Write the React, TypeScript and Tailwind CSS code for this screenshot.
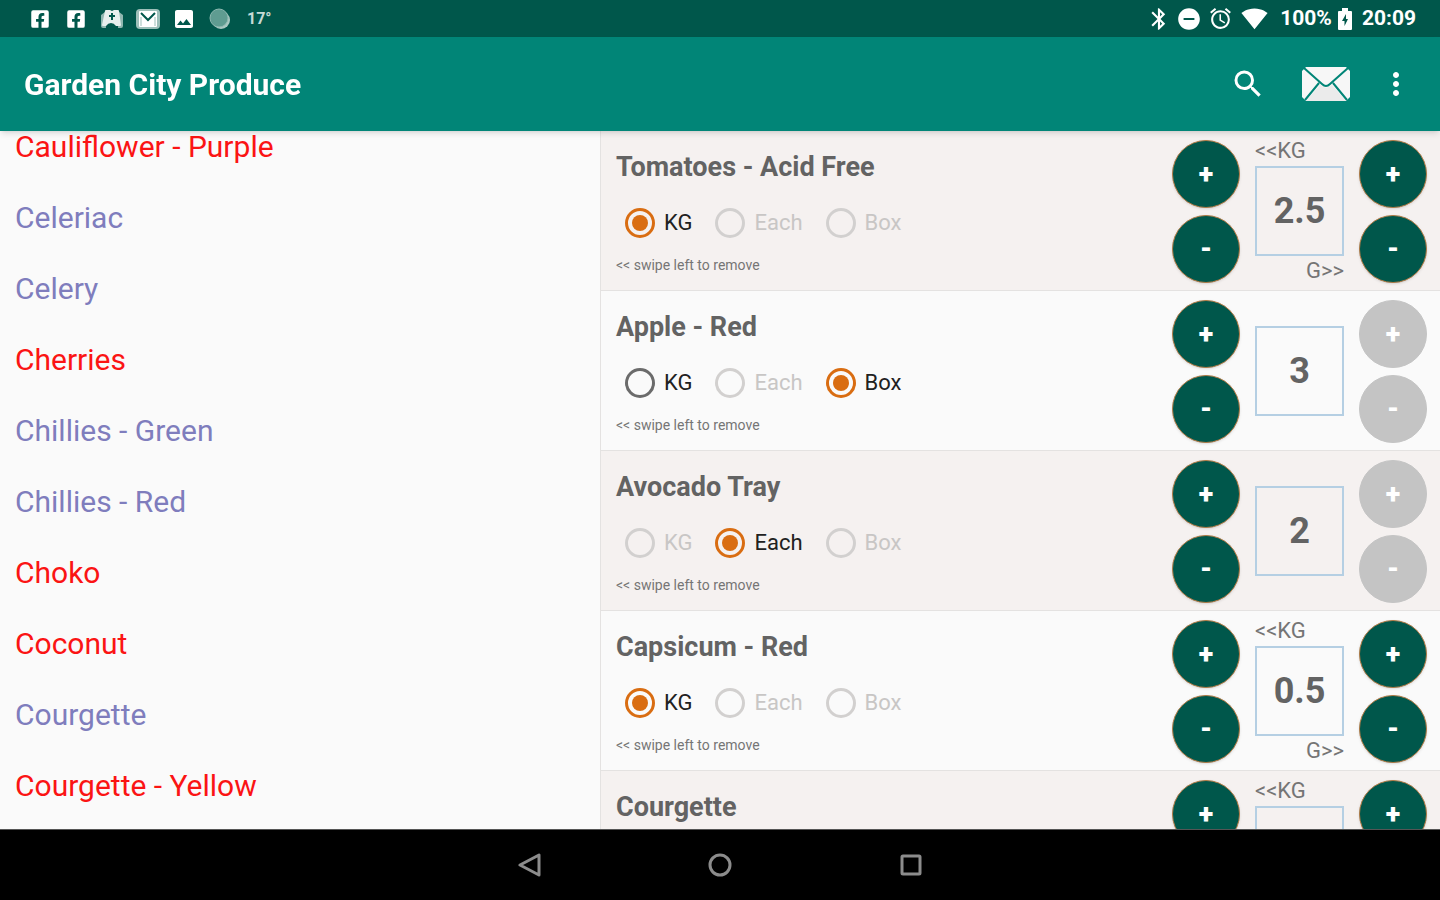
import React, { useState } from 'react';
import { MdAlarm, MdBluetooth, MdDoNotDisturbOn, MdImage, MdMoreVert, MdSearch, MdSignalWifi4Bar } from 'react-icons/md';
import { FaFacebookSquare } from 'react-icons/fa';

type Unit = 'KG' | 'Each' | 'Box';

interface Produce {
  name: string;
  selected: boolean;
}

interface OrderLine {
  name: string;
  unit: Unit;
  units: Unit[];
  qty: number;
}

const PRODUCE: Produce[] = [
  { name: 'Cauliflower - Purple', selected: true },
  { name: 'Celeriac', selected: false },
  { name: 'Celery', selected: false },
  { name: 'Cherries', selected: true },
  { name: 'Chillies - Green', selected: false },
  { name: 'Chillies - Red', selected: false },
  { name: 'Choko', selected: true },
  { name: 'Coconut', selected: true },
  { name: 'Courgette', selected: false },
  { name: 'Courgette - Yellow', selected: true },
];

const INITIAL_ORDER: OrderLine[] = [
  { name: 'Tomatoes - Acid Free', unit: 'KG', units: ['KG'], qty: 2.5 },
  { name: 'Apple - Red', unit: 'Box', units: ['KG', 'Box'], qty: 3 },
  { name: 'Avocado Tray', unit: 'Each', units: ['Each'], qty: 2 },
  { name: 'Capsicum - Red', unit: 'KG', units: ['KG'], qty: 0.5 },
  { name: 'Courgette', unit: 'KG', units: ['KG'], qty: 1 },
];

const ALL_UNITS: Unit[] = ['KG', 'Each', 'Box'];

const MapIcon = () => (
  <svg width="24" height="20" viewBox="0 0 24 20">
    <path d="M5 3 1 6v11q0 2 2 2h3zM19 3l4 3v11q0 2-2 2h-3z" fill="#8fb7b0" />
    <path d="M5 2q0-1 1-1h4l2 1 2-1h4q1 0 1 1l2 14q0 1-1 1h-4q-2-3-5-3t-5 3H3q-1 0-1-1z" fill="#e6efed" />
    <path d="M12 4v7M9 7h6" stroke="#00574b" strokeWidth="2" />
  </svg>
);

const GmailIcon = () => (
  <svg width="24" height="20" viewBox="0 0 24 20">
    <rect width="24" height="20" rx="4" fill="#9dbfb9" />
    <rect x="3" y="2" width="18" height="16" rx="1" fill="#fff" />
    <path d="M5 4l7 7 7-7" fill="none" stroke="#00574b" strokeWidth="2" />
    <path d="M5 8v9M19 8v9" stroke="#9dbfb9" strokeWidth="1" />
  </svg>
);

const BatteryIcon = () => (
  <svg width="14" height="22" viewBox="0 0 14 22">
    <path d="M4 0h6v3h3q1 0 1 1v17q0 1-1 1H1q-1 0-1-1V4q0-1 1-1h3z" fill="#fff" />
    <path d="M8 6 4 13h2.500v5L10 11H8z" fill="#00574b" />
  </svg>
);

const EnvelopeIcon = () => (
  <svg width="50" height="36" viewBox="0 0 50 36">
    <path d="M5 1h40l4 4v26l-4 4H5l-4-4V5z" fill="#f7f7f7" />
    <path d="M5 35l14-16 6 3 6-3 14 16z" fill="#ebebeb" />
    <path d="M3 2l18 16q4 4 8 0L47 2M4 34l14-17M46 34L32 17" fill="none" stroke="#018577" strokeWidth="2" />
  </svg>
);

const StatusBar = () => (
  <div className="flex h-[37px] shrink-0 items-center justify-between bg-[#00574b] pr-6 pl-7 text-white">
    <div className="flex items-center gap-3">
      <FaFacebookSquare size={20} className="w-6" />
      <FaFacebookSquare size={20} className="w-6" />
      <MapIcon />
      <GmailIcon />
      <MdImage size={26} className="w-6" />
      <svg width="24" height="22" viewBox="0 0 24 22">
        <circle cx="13" cy="12" r="9" fill="#a9c8c2" />
        <circle cx="11" cy="10" r="9" fill="#5f9c91" stroke="#8db8b0" />
      </svg>
      <span className="ml-[3px] text-base font-bold text-[#c5dad6]">17°</span>
    </div>
    <div className="flex items-center text-[21px] font-bold">
      <MdBluetooth size={26} />
      <MdDoNotDisturbOn size={26} className="ml-1" />
      <MdAlarm size={25} className="ml-[6px]" />
      <MdSignalWifi4Bar size={27} className="ml-2" />
      <span className="mr-[6px] ml-3">100%</span>
      <BatteryIcon />
      <span className="ml-[10px]">20:09</span>
    </div>
  </div>
);

const RoundButton: React.FC<{ label: string; sign: string; disabled?: boolean; onClick: () => void }> = ({ label, sign, disabled, onClick }) => (
  <button
    aria-label={label}
    disabled={disabled}
    onClick={onClick}
    className="size-[68px] rounded-full border border-[#b07a45] bg-[#00574b] text-[27px] font-black text-white shadow-sm disabled:border-[#c4c4c4] disabled:bg-[#c4c4c4] disabled:shadow-none"
  >
    {sign}
  </button>
);

const OrderRow: React.FC<{ line: OrderLine; onChange: (line: OrderLine) => void }> = ({ line, onChange }) => {
  const byWeight = line.unit === 'KG';
  const step = (amount: number) => onChange({ ...line, qty: Math.max(0, line.qty + amount) });

  return (
    <li className="flex items-center gap-[15px] border-b border-[#e4e2e1] bg-[#fafafa] pr-[13px] pl-[15px] odd:bg-[#f5f1f0]">
      <div className="flex-1 pt-[2px]">
        <h2 className="text-[27px] leading-8 font-bold text-[#636363]">{line.name}</h2>
        <div className="mt-[22px] flex gap-[23px] pl-[9px]">
          {ALL_UNITS.map(unit => (
            <label
              key={unit}
              className="flex items-center gap-[9px] text-[22px] leading-9 text-[#212121] has-disabled:text-[#c8c6c5]"
            >
              <input
                type="radio"
                name={line.name}
                checked={line.unit === unit}
                disabled={!line.units.includes(unit)}
                onChange={() => onChange({ ...line, unit })}
                className="grid size-[30px] appearance-none place-content-center rounded-full border-3 border-[#6b6b6b] before:size-4 before:rounded-full checked:border-[#d96d12] checked:before:bg-[#d96d12] disabled:border-[#d2d0cf]"
              />
              {unit}
            </label>
          ))}
        </div>
        <p className="mt-4 text-[14px] leading-4 text-[#757575]">&lt;&lt; swipe left to remove</p>
      </div>

      <div className="flex flex-col gap-[7px] pt-[9px] pb-[7px]">
        <RoundButton label={`Increase ${line.name}`} sign="+" onClick={() => step(1)} />
        <RoundButton label={`Decrease ${line.name}`} sign="-" onClick={() => step(-1)} />
      </div>

      <div className="flex w-[89px] flex-col text-[22px] leading-[30px] text-[#757575]">
        {byWeight && <span>&lt;&lt;KG</span>}
        <input
          type="text"
          aria-label={`${line.name} quantity`}
          value={line.qty}
          onChange={e => onChange({ ...line, qty: Number(e.target.value) || 0 })}
          className="h-[90px] w-full border-2 border-[#b5cfe3] text-center text-4xl font-bold text-[#636363]"
        />
        {byWeight && <span className="text-right">G&gt;&gt;</span>}
      </div>

      <div className="flex flex-col gap-[7px] pt-[9px] pb-[7px]">
        <RoundButton label={`Increase ${line.name} grams`} sign="+" disabled={!byWeight} onClick={() => step(0.1)} />
        <RoundButton label={`Decrease ${line.name} grams`} sign="-" disabled={!byWeight} onClick={() => step(-0.1)} />
      </div>
    </li>
  );
};

const App: React.FC = () => {
  const [order, setOrder] = useState<OrderLine[]>(INITIAL_ORDER);

  const updateLine = (index: number, line: OrderLine) => {
    setOrder(order.map((l, i) => (i === index ? line : l)));
  };

  return (
    <div className="flex h-screen flex-col overflow-hidden bg-[#fafafa] font-['Roboto',sans-serif]">
      <StatusBar />

      {/* App bar */}
      <header className="z-10 flex h-[94px] shrink-0 items-center bg-[#018577] pr-[26px] pl-6 text-white shadow-md">
        <h1 className="flex-1 text-[30px] font-bold">Garden City Produce</h1>
        <button aria-label="Search"><MdSearch size={36} /></button>
        <button aria-label="Email order" className="ml-[35px]"><EnvelopeIcon /></button>
        <button aria-label="More options" className="ml-[27px]"><MdMoreVert size={36} /></button>
      </header>

      <main className="flex min-h-0 flex-1">
        {/* Produce list, scrolled part way */}
        <ul className="-mt-5 w-5/12 text-[30px]">
          {PRODUCE.map(item => (
            <li key={item.name} className="flex h-[71px] items-center pl-[15px]">
              <span className={item.selected ? 'text-[#fb1414]' : 'text-[#7f7dbd]'}>{item.name}</span>
            </li>
          ))}
        </ul>

        {/* Current order */}
        <ul className="flex-1 overflow-y-auto border-l border-[#e4e2e1] [scrollbar-width:none]">
          {order.map((line, index) => (
            <OrderRow key={line.name} line={line} onChange={l => updateLine(index, l)} />
          ))}
        </ul>
      </main>

      {/* Navigation bar */}
      <nav className="z-10 flex h-[71px] shrink-0 items-center justify-center gap-[167px] border-t border-[#555] bg-black text-[#8c8c8c]">
        <button aria-label="Back">
          <svg width="24" height="24" viewBox="0 0 24 24" fill="none" stroke="currentColor" strokeWidth="3">
            <path d="M22 2v20L3 12z" strokeLinejoin="round" />
          </svg>
        </button>
        <button aria-label="Home">
          <svg width="24" height="24" viewBox="0 0 24 24" fill="none" stroke="currentColor" strokeWidth="3">
            <circle cx="12" cy="12" r="10" />
          </svg>
        </button>
        <button aria-label="Recent apps">
          <svg width="24" height="24" viewBox="0 0 24 24" fill="none" stroke="currentColor" strokeWidth="3">
            <rect x="3" y="3" width="18" height="18" rx="1" />
          </svg>
        </button>
      </nav>
    </div>
  );
};

export default App;
